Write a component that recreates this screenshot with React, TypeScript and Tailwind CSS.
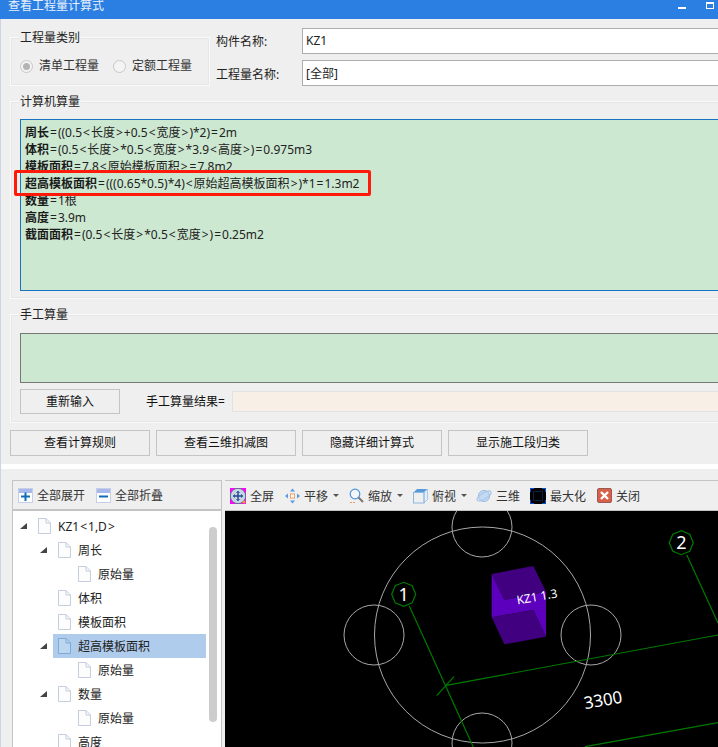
const font = { fontFamily: '"Noto Sans", "Noto Sans CJK SC", sans-serif' };
const drawFont = '"Noto Sans", sans-serif';

// the operators sit wider in the original's font
function Ops({ text }: { text: string }) {
  return (
    <>
      {text.split(/([=<>])/).map((part, i) =>
        part === '=' || part === '<' || part === '>' ? (
          <span key={i} className="px-[1px]">{part}</span>
        ) : (
          <span key={i}>{part}</span>
        ),
      )}
    </>
  );
}

function GroupBox({ title, className, children }: { title: string; className?: string; children?: React.ReactNode }) {
  return (
    <div className={`relative border border-[#fafafa] shadow-[inset_0_0_0_1px_#e6e6e6] ${className ?? ''}`}>
      <span className="absolute left-[8px] -top-[7px] bg-[#efefef] px-[1px] text-[12px] leading-[14px] text-[#222]">{title}</span>
      {children}
    </div>
  );
}

function Btn({ label, className }: { label: string; className: string }) {
  return (
    <div className={`flex shrink-0 items-center justify-center border border-[#c4c4c4] text-[12px] text-[#111] ${className}`}>
      {label}
    </div>
  );
}

function Formula({ name, text }: { name: string; text: string }) {
  return (
    <div className="h-[17px] whitespace-nowrap text-[12px] leading-[17px] text-[#222]">
      <span className="font-bold text-[#1a1a1a]">{name}</span>
      <Ops text={text} />
    </div>
  );
}

function Caret() {
  return (
    <svg width="6" height="3" viewBox="0 0 6 3" className="ml-[5px]">
      <polygon points="0,0 6,0 3,3" fill="#555" />
    </svg>
  );
}

function Doc({ selected }: { selected?: boolean }) {
  return (
    <svg width="13" height="16" viewBox="0 0 13 16" className="shrink-0">
      <path
        d="M0.5 0.5H8L12.5 5V15.5H0.5Z"
        fill={selected ? '#bcd6f0' : '#fdfdfd'}
        stroke={selected ? '#7fa9d6' : '#c3cddd'}
      />
      <path d="M8 0.5V5H12.5" fill="none" stroke={selected ? '#7fa9d6' : '#c3cddd'} />
    </svg>
  );
}

function TreeRow({ level, label, open, selected }: { level: number; label: string; open?: boolean; selected?: boolean }) {
  const indent = ['pl-[7px]', 'pl-[27px]', 'pl-[47px]'][level];
  return (
    <div className={`flex h-[24px] items-center ${indent}`}>
      <div className="flex w-[18px] shrink-0 items-center">
        {open && (
          <svg width="7" height="6" viewBox="0 0 7 6">
            <polygon points="7,0 7,6 0,6" fill="#444" />
          </svg>
        )}
      </div>
      <div className={`flex h-[24px] items-center ${selected ? '-ml-[5px] w-[153px] bg-[#b0cced] pl-[5px]' : ''}`}>
        <Doc selected={selected} />
        <span className="ml-[7px] mt-[2px] whitespace-nowrap text-[12px] text-[#222]">
          <Ops text={label} />
        </span>
      </div>
    </div>
  );
}

function Tool({ icon, label, caret, className }: { icon: React.ReactNode; label: string; caret?: boolean; className?: string }) {
  return (
    <div className={`flex shrink-0 items-center ${className ?? ''}`}>
      {icon}
      <span className="ml-[4px] mt-[2px] whitespace-nowrap text-[12px] text-[#333]">{label}</span>
      {caret && <Caret />}
    </div>
  );
}

const FullIcon = (
  <svg width="16" height="16" viewBox="0 0 16 16">
    <rect width="16" height="16" fill="#f0f" />
    <circle cx="8" cy="8" r="7.7" fill="#c8d6e8" stroke="#5c6f8a" />
    <path d="M8 3.5V12.5M3.5 8H12.5" stroke="#1e4a8c" strokeWidth="1.4" />
    <path d="M6.5 5L8 3.2L9.5 5M6.5 11L8 12.8L9.5 11M5 6.5L3.2 8L5 9.5M11 6.5L12.8 8L11 9.5" fill="none" stroke="#1e4a8c" />
    <circle cx="14" cy="14" r="1.6" fill="#e0a030" />
  </svg>
);

const PanIcon = (
  <svg width="15" height="16" viewBox="0 0 15 16">
    <rect x="5.5" y="6" width="4" height="4" fill="#fff" stroke="#e8a26a" />
    <polygon points="7.5,0.5 10,3.5 5,3.5" fill="#5a9be0" />
    <polygon points="7.5,15.5 10,12.5 5,12.5" fill="#5a9be0" />
    <polygon points="0,8 3,5.5 3,10.5" fill="#5a9be0" />
    <polygon points="15,8 12,5.5 12,10.5" fill="#5a9be0" />
  </svg>
);

const ZoomIcon = (
  <svg width="15" height="16" viewBox="0 0 15 16">
    <circle cx="6" cy="6" r="4.8" fill="#f4f8fd" stroke="#4f93d8" strokeWidth="1.2" />
    <path d="M9.5 9.5L14 14" stroke="#777" strokeWidth="2" />
    <path d="M1 14.5H6" stroke="#e59a6a" strokeDasharray="2 1" />
  </svg>
);

const TopIcon = (
  <svg width="15" height="16" viewBox="0 0 15 16">
    <polygon points="4,1 14.5,1 11,4.5 0.5,4.5" fill="#5b9ad8" />
    <polygon points="11,4.5 14.5,1 14.5,11.5 11,15" fill="#e4eff9" stroke="#8db8e2" strokeWidth="0.7" />
    <rect x="0.5" y="4.5" width="10.5" height="10.5" fill="none" stroke="#8db8e2" />
  </svg>
);

const OrbitIcon = (
  <svg width="16" height="16" viewBox="0 0 16 16">
    <circle cx="8" cy="8" r="5.6" fill="#c4daf3" stroke="#9dbde2" />
    <ellipse cx="8" cy="8" rx="8" ry="3" transform="rotate(-32 8 8)" fill="none" stroke="#a9c6e8" strokeWidth="1.2" />
  </svg>
);

const MaxIcon = (
  <svg width="16" height="16" viewBox="0 0 16 16">
    <rect width="16" height="16" fill="#000" />
    <path d="M0 4V0H4M12 0H16V4M16 12V16H12M4 16H0V12" fill="none" stroke="#0a50d0" strokeWidth="2" />
    <rect x="3.5" y="3.5" width="9" height="9" fill="none" stroke="#1c3f80" strokeDasharray="1 1" />
  </svg>
);

const CloseIcon = (
  <svg width="15" height="15" viewBox="0 0 15 15">
    <rect x="0.5" y="0.5" width="14" height="14" rx="1.5" fill="#d8604a" stroke="#9a5a50" />
    <path d="M4 4L11 11M11 4L4 11" stroke="#fff" strokeWidth="2.4" />
  </svg>
);

function PlusMinus({ minus }: { minus?: boolean }) {
  return (
    <svg width="15" height="15" viewBox="0 0 15 15">
      <rect x="0.5" y="0.5" width="14" height="14" fill="#fff" stroke="#c5cfe8" />
      <rect x="1" y="1" width="13" height="4" fill="#a9b8ea" />
      {minus ? (
        <path d="M3 8.5H12" stroke="#0f6cb5" strokeWidth="2" />
      ) : (
        <path d="M3 8.5H12M7.5 4.5V13" stroke="#0f6cb5" strokeWidth="2" />
      )}
    </svg>
  );
}

function Axis({ x, y, label }: { x: number; y: number; label: string }) {
  const pts = Array.from({ length: 8 }, (_, i) => {
    const a = (i * Math.PI) / 4;
    return `${x + 12 * Math.cos(a)},${y + 12 * Math.sin(a)}`;
  }).join(' ');
  return (
    <g>
      <polygon points={pts} fill="none" stroke="#007a00" strokeWidth="1.2" />
      <text x={x} y={y + 6.5} textAnchor="middle" fill="#fff" fontSize="18" fontFamily={drawFont}>
        {label}
      </text>
    </g>
  );
}

function Drawing() {
  const p = (x: number, y: number) => `${470 + x / 3},${480 + y / 3}`;
  return (
    <svg viewBox="225 511 493 236" className="h-[236px] w-[493px] bg-black">
      <g fill="none" stroke="#a8a8a8" strokeWidth="1">
        <circle cx="482.5" cy="635" r="108" />
        <circle cx="374" cy="635" r="30" />
        <circle cx="591" cy="635" r="30" />
        <circle cx="482" cy="527" r="30" />
        <circle cx="482" cy="743" r="30" />
      </g>
      <g stroke="#007a00" strokeWidth="1.2">
        <line x1="409.3" y1="606" x2="473.3" y2="747" />
        <line x1="686.7" y1="554.7" x2="718" y2="623" />
        <line x1="436.7" y1="695.7" x2="454" y2="676.7" />
        <line x1="445" y1="685.7" x2="718" y2="635" />
        <line x1="585" y1="746.7" x2="718" y2="722.7" />
      </g>
      <Axis x={403.7} y={594.3} label="1" />
      <Axis x={681.3} y={542.7} label="2" />
      <polygon points={`${p(65, 282)} ${p(190, 258)} ${p(228, 335)} ${p(103, 360)}`} fill="#40007f" />
      <polygon points={`${p(65, 282)} ${p(103, 360)} ${p(228, 335)} ${p(228, 470)} ${p(190, 390)} ${p(65, 412)}`} fill="#5c00bd" />
      <polygon points={`${p(65, 412)} ${p(190, 390)} ${p(228, 470)} ${p(103, 493)}`} fill="#40007f" />
      <text x="537" y="601" textAnchor="middle" fill="#fff" fontSize="12" fontFamily={drawFont} transform="rotate(-10 537 597)">
        KZ1 1.3
      </text>
      <text x="603" y="706" textAnchor="middle" fill="#fff" fontSize="17" fontFamily={drawFont} transform="rotate(-10 603 700)">
        3300
      </text>
    </svg>
  );
}

export default function App() {
  return (
    <div className="flex h-[747px] w-[718px] flex-col overflow-hidden bg-[#efefef]" style={font}>
      {/* title bar */}
      <div className="flex h-[19px] shrink-0 items-start justify-between overflow-hidden bg-[#2b7fe3] pl-[8px] pr-[4px]">
        <span className="-mt-[1px] text-[12px] leading-[14px] text-[#e8f0fb]">查看工程量计算式</span>
        <div className="flex items-start">
          <div className="mt-[7px] h-[2px] w-[8px] bg-white" />
          <div className="ml-[20px] mt-[2px] h-[7px] w-[8px] border border-t-2 border-white" />
        </div>
      </div>

      <div className="flex h-[445px] shrink-0 flex-col border-l border-[#ccd5e8] pl-[9px]">
        <div className="flex h-[67px] shrink-0 items-start">
          <GroupBox title="工程量类别" className="mt-[18px] flex h-[49px] w-[200px] shrink-0 items-center pl-[9px]">
            <div className="mt-[9px] flex items-center text-[12px] text-[#333]">
              <span className="flex h-[13px] w-[13px] items-center justify-center rounded-full border border-[#c8c8c8] bg-[#f4f4f4]">
                <span className="h-[7px] w-[7px] rounded-full bg-[#b4b4b4]" />
              </span>
              <span className="ml-[6px]">清单工程量</span>
              <span className="ml-[14px] h-[13px] w-[13px] rounded-full border border-[#c8c8c8] bg-[#f4f4f4]" />
              <span className="ml-[6px]">定额工程量</span>
            </div>
          </GroupBox>
          <div className="ml-[6px] mt-[9px] flex flex-col gap-[6px]">
            <div className="flex h-[26px] items-center">
              <span className="w-[86px] translate-y-[1px] text-[12px] text-[#222]">构件名称:</span>
              <div className="flex h-[26px] w-[430px] items-center border border-[#adadad] bg-white pl-[3px] text-[12px] text-[#222]">KZ1</div>
            </div>
            <div className="flex h-[26px] items-center">
              <span className="w-[86px] translate-y-[2px] text-[12px] text-[#222]">工程量名称:</span>
              <div className="flex h-[26px] w-[430px] items-center border border-[#adadad] bg-white pl-[3px] pt-[1px] text-[12px] text-[#222]">[全部]</div>
            </div>
          </div>
        </div>

        <GroupBox title="计算机算量" className="mt-[15px] h-[198px] w-[730px] shrink-0 pl-[9px] pt-[17px]">
          <div className="h-[172px] border border-[#1a73c0] bg-[#cde8d1] pl-[4px] pt-[4px]">
            <Formula name="周长" text="=((0.5<长度>+0.5<宽度>)*2)=2m" />
            <Formula name="体积" text="=(0.5<长度>*0.5<宽度>*3.9<高度>)=0.975m3" />
            <Formula name="模板面积" text="=7.8<原始模板面积>=7.8m2" />
            <div className="relative">
              <Formula name="超高模板面积" text="=(((0.65*0.5)*4)<原始超高模板面积>)*1=1.3m2" />
              <div className="absolute -left-[11px] -top-[5px] h-[26px] w-[357px] rounded-[2px] border-[3px] border-[#ff1a0a]" />
            </div>
            <Formula name="数量" text="=1根" />
            <Formula name="高度" text="=3.9m" />
            <Formula name="截面面积" text="=(0.5<长度>*0.5<宽度>)=0.25m2" />
          </div>
        </GroupBox>

        <GroupBox title="手工算量" className="mt-[15px] h-[109px] w-[730px] shrink-0 pl-[9px] pt-[18px]">
          <div className="h-[50px] border border-[#777] bg-[#cde8d1]" />
          <div className="mt-[6px] flex items-center">
            <Btn label="重新输入" className="h-[25px] w-[100px]" />
            <span className="ml-[26px] whitespace-nowrap text-[12px] text-[#111]">手工算量结果=</span>
            <div className="ml-[7px] h-[21px] w-[500px] border border-[#e2e2e2] bg-[#f8efe6]" />
          </div>
        </GroupBox>

        <div className="mt-[7px] flex gap-[6px]">
          <Btn label="查看计算规则" className="h-[26px] w-[140px]" />
          <Btn label="查看三维扣减图" className="h-[26px] w-[140px]" />
          <Btn label="隐藏详细计算式" className="h-[26px] w-[140px]" />
          <Btn label="显示施工段归类" className="h-[26px] w-[140px]" />
        </div>
      </div>

      {/* white band */}
      <div className="h-[5px] shrink-0 border-l border-[#ccd5e8] bg-white" />

      <div className="flex min-h-0 flex-1 gap-[3px] border-l border-[#ccd5e8] pl-[11px] pt-[11px]">
        <div className="flex h-[300px] w-[210px] shrink-0 flex-col border border-[#c4c4c4]">
          <div className="flex h-[30px] shrink-0 items-center gap-[11px] border-b-2 border-[#c4c4c4] pl-[5px]">
            <Tool icon={<PlusMinus />} label="全部展开" />
            <Tool icon={<PlusMinus minus />} label="全部折叠" />
          </div>
          <div className="relative flex-1 bg-white pt-[3px]">
            <TreeRow level={0} label="KZ1<1,D>" open />
            <TreeRow level={1} label="周长" open />
            <TreeRow level={2} label="原始量" />
            <TreeRow level={1} label="体积" />
            <TreeRow level={1} label="模板面积" />
            <TreeRow level={1} label="超高模板面积" open selected />
            <TreeRow level={2} label="原始量" />
            <TreeRow level={1} label="数量" open />
            <TreeRow level={2} label="原始量" />
            <TreeRow level={1} label="高度" />
            <div className="absolute left-[196px] top-[16px] h-[195px] w-[8px] rounded-full bg-[#cdcdcd]" />
          </div>
        </div>

        <div className="flex w-[493px] shrink-0 flex-col border-t border-[#c4c4c4]">
          <div className="flex h-[30px] shrink-0 items-center border-b border-[#c4c4c4] pl-[5px]">
            <Tool icon={FullIcon} label="全屏" />
            <Tool icon={PanIcon} label="平移" caret className="ml-[11px]" />
            <Tool icon={ZoomIcon} label="缩放" caret className="ml-[10px]" />
            <Tool icon={TopIcon} label="俯视" caret className="ml-[10px]" />
            <Tool icon={OrbitIcon} label="三维" className="ml-[9px]" />
            <Tool icon={MaxIcon} label="最大化" className="ml-[10px]" />
            <Tool icon={CloseIcon} label="关闭" className="ml-[11px]" />
          </div>
          <Drawing />
        </div>
      </div>
    </div>
  );
}
